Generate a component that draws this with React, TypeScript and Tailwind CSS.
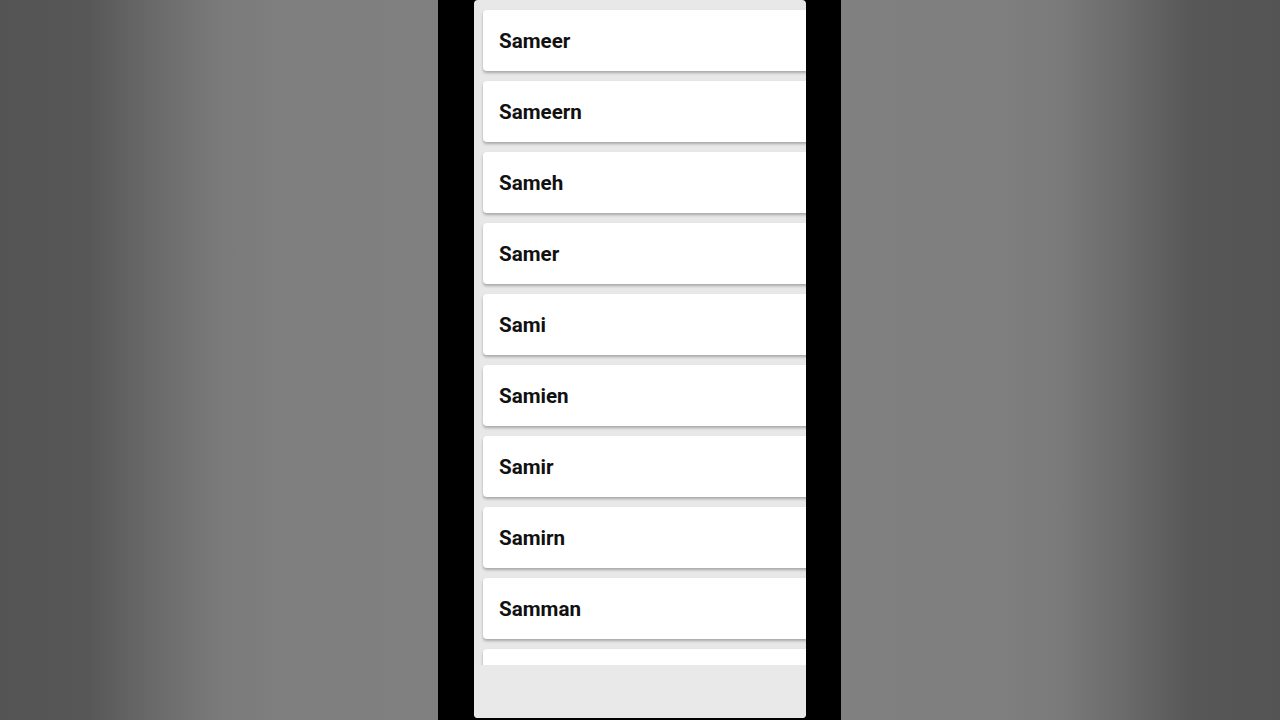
const NAMES = ['Sameer', 'Sameern', 'Sameh', 'Samer', 'Sami', 'Samien', 'Samir', 'Samirn', 'Samman'];

export default function App() {
  return (
    <div className="flex h-[720px] w-full overflow-hidden" style={{ fontFamily: 'Roboto, "Noto Sans", sans-serif' }}>
      <div className="w-[438px] shrink-0 bg-[linear-gradient(to_right,#545454_0%,#575757_20%,#6a6a6a_35%,#7a7a7a_50%,#7f7f7f_65%,#808080_100%)]" />
      <div className="w-[403px] shrink-0 bg-black pl-[36px] pr-[35px]">
        <div className="flex h-[718px] flex-col overflow-hidden rounded-[4px] bg-[#e8e8e8]">
          <div className="h-[665px] overflow-hidden">
            <div className="flex flex-col gap-[10px] pl-[9px] pt-[10px]">
              {NAMES.map(n => (
                <div key={n} className="flex h-[61px] w-[340px] shrink-0 items-center rounded-[4px] bg-white pl-[16px] pt-[1px] shadow-[0_2px_3px_rgba(0,0,0,0.28)]">
                  <span className="text-[20.6px] font-bold text-[#111]">{n}</span>
                </div>
              ))}
              {/* next row, scrolled mostly out of view */}
              <div className="h-[61px] w-[340px] shrink-0 rounded-[4px] bg-white shadow-[0_2px_3px_rgba(0,0,0,0.28)]" />
            </div>
          </div>
          <div className="flex-1 bg-[#e9e9e9]" />
        </div>
      </div>
      <div className="flex-1 bg-[linear-gradient(to_left,#545454_0%,#575757_20%,#6a6a6a_35%,#7a7a7a_50%,#7f7f7f_65%,#808080_100%)]" />
    </div>
  );
}
